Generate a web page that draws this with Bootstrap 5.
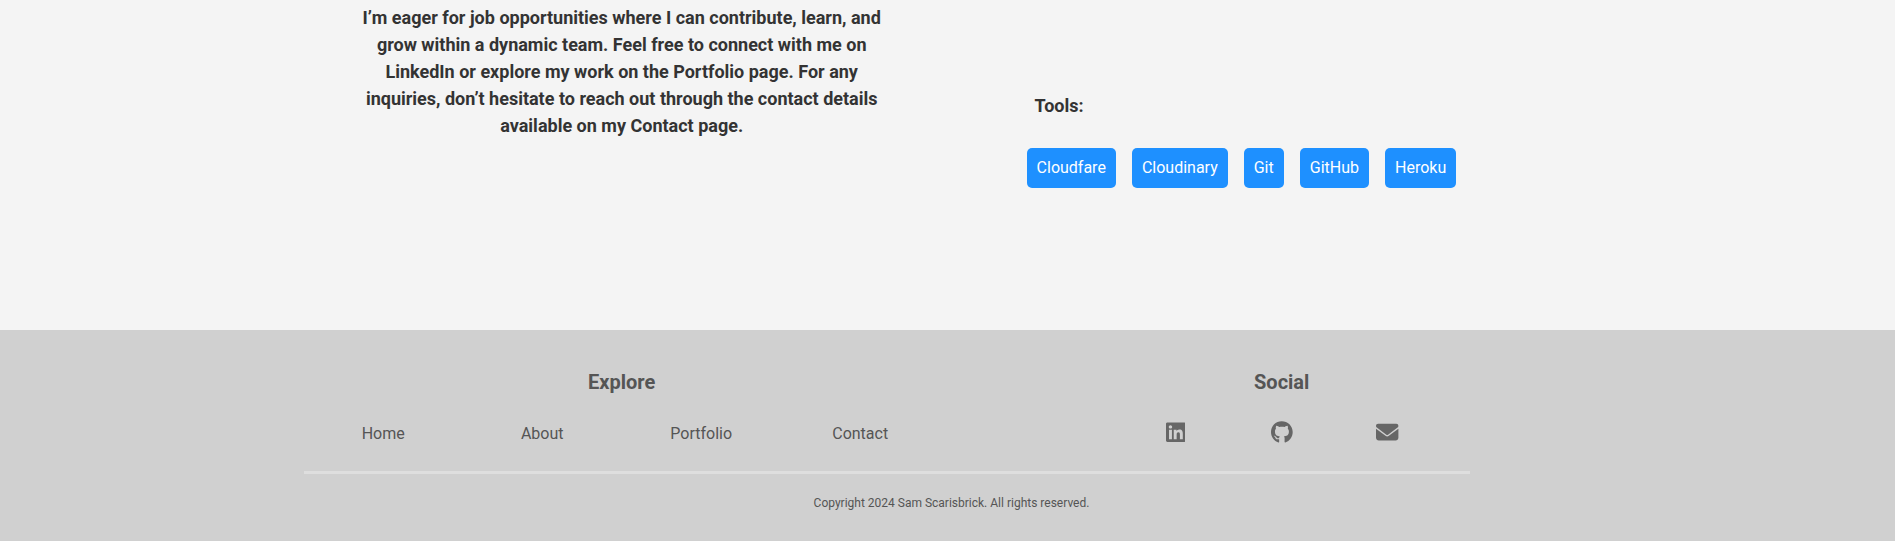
<!DOCTYPE html>
<html lang="en">
<head>
<meta charset="utf-8">
<meta name="viewport" content="width=device-width, initial-scale=1">
<title>About</title>
<link href="https://cdn.jsdelivr.net/npm/bootstrap@5.3.0/dist/css/bootstrap.min.css" rel="stylesheet">
<style>
body{font-family:Roboto,sans-serif;background:#f4f4f4;color:#333;overflow:hidden}
.page-main{height:330px;padding-left:303.7px}
.about-copy{width:636px;padding:4px 50px 0;font-size:18px;line-height:27px;font-weight:700}
.tools{margin-left:86.9px;padding-top:92px}
.tools-title{font-size:18px;line-height:27px;font-weight:700;margin:0 0 29px 8px}
.tool{background:#1e90ff;color:#fff;border-radius:5px;padding:8px 10px;line-height:24px}
.site-footer{height:211px;background:#d0d0d0;color:#555;padding-top:40px}
.footer-cols{width:1167px;margin-left:303.7px;padding-right:30px;height:101px}
.footer-title{font-size:20px;line-height:24px;font-weight:700;margin:0 0 28px}
.explore{width:636px}
.social{width:318px}
.site-footer a{color:#555;text-decoration:none;line-height:24px}
.social .footer-title{margin-bottom:27.3px}
.social svg{fill:#666;display:block;margin:0 auto}
.divider{width:1166px;height:3px;margin-left:304px;background:#dedede}
.copyright{font-size:12px;line-height:18px;margin:20px 0 0 8px}
</style>
</head>
<body>
<main class="page-main d-flex">
  <p class="about-copy text-center mb-0">I’m eager for job opportunities where I can contribute, learn, and grow within a dynamic team. Feel free to connect with me on LinkedIn or explore my work on the Portfolio page. For any inquiries, don’t hesitate to reach out through the contact details available on my Contact page.</p>
  <section class="tools">
    <h2 class="tools-title">Tools:</h2>
    <div class="d-flex gap-3">
      <span class="tool">Cloudfare</span><span class="tool">Cloudinary</span><span class="tool">Git</span><span class="tool">GitHub</span><span class="tool">Heroku</span>
    </div>
  </section>
</main>
<footer class="site-footer">
  <div class="footer-cols d-flex justify-content-between text-center">
    <nav class="explore">
      <h2 class="footer-title">Explore</h2>
      <div class="d-flex">
        <a class="flex-fill w-25" href="#">Home</a><a class="flex-fill w-25" href="#">About</a><a class="flex-fill w-25" href="#">Portfolio</a><a class="flex-fill w-25" href="#">Contact</a>
      </div>
    </nav>
    <div class="social">
      <h2 class="footer-title">Social</h2>
      <div class="row g-0">
        <a class="col-4" href="#" aria-label="LinkedIn"><svg width="19.6" height="22.4" viewBox="0 0 448 512"><path d="M416 32H31.900C14.300 32 0 46.500 0 64.300v383.400C0 465.500 14.300 480 31.900 480H416c17.600 0 32-14.500 32-32.300V64.300c0-17.800-14.400-32.300-32-32.300zM135.400 416H69V202.200h66.500V416zm-33.200-243c-21.300 0-38.500-17.300-38.500-38.500S80.900 96 102.200 96c21.200 0 38.500 17.300 38.500 38.500 0 21.300-17.200 38.500-38.500 38.500zm282.100 243h-66.400V312c0-24.800-.5-56.700-34.500-56.700-34.600 0-39.900 27-39.900 54.900V416h-66.400V202.200h63.700v29.200h.9c8.900-16.800 30.600-34.500 62.900-34.500 67.200 0 79.700 44.300 79.700 101.900V416z"/></svg></a>
        <a class="col-4" href="#" aria-label="GitHub"><svg width="21.700" height="22.400" viewBox="0 0 496 512"><path d="M165.900 397.400c0 2-2.300 3.600-5.200 3.600-3.300.3-5.600-1.300-5.600-3.600 0-2 2.300-3.600 5.200-3.600 3-.3 5.600 1.300 5.600 3.600zm-31.100-4.500c-.7 2 1.300 4.300 4.300 4.900 2.600 1 5.600 0 6.200-2s-1.300-4.300-4.300-5.200c-2.600-.7-5.500.3-6.200 2.300zm44.200-1.700c-2.900.7-4.900 2.600-4.600 4.900.3 2 2.900 3.300 5.900 2.600 2.900-.7 4.900-2.600 4.600-4.600-.3-1.900-3-3.200-5.900-2.900zM244.800 8C106.100 8 0 113.300 0 252c0 110.900 69.800 205.800 169.500 239.200 12.800 2.300 17.300-5.600 17.300-12.100 0-6.200-.3-40.400-.3-61.400 0 0-70 15-84.700-29.800 0 0-11.400-29.100-27.800-36.600 0 0-22.900-15.700 1.600-15.400 0 0 24.900 2 38.600 25.800 21.900 38.600 58.600 27.500 72.900 20.900 2.300-16 8.800-27.100 16-33.700-55.900-6.200-112.300-14.300-112.300-110.500 0-27.500 7.600-41.300 23.600-58.900-2.600-6.500-11.100-33.300 2.600-67.900 20.900-6.500 69 27 69 27 20-5.600 41.500-8.500 62.800-8.500s42.800 2.900 62.800 8.500c0 0 48.100-33.600 69-27 13.700 34.700 5.200 61.400 2.600 67.900 16 17.700 25.800 31.500 25.800 58.900 0 96.500-58.900 104.200-114.800 110.500 9.200 7.900 17 22.900 17 46.400 0 33.700-.3 75.400-.3 83.600 0 6.500 4.600 14.400 17.300 12.100C428.200 457.800 496 362.900 496 252 496 113.300 383.500 8 244.800 8z"/></svg></a>
        <a class="col-4" href="#" aria-label="Email"><svg width="22.4" height="22.4" viewBox="0 0 512 512"><path d="M48 64C21.500 64 0 85.500 0 112c0 15.100 7.100 29.300 19.200 38.400L236.800 313.600c11.400 8.500 27 8.500 38.400 0L492.800 150.400c12.100-9.100 19.200-23.300 19.200-38.400 0-26.500-21.500-48-48-48H48zM0 176V384c0 35.300 28.700 64 64 64H448c35.300 0 64-28.700 64-64V176L294.400 339.200c-22.800 17.100-54 17.100-76.800 0L0 176z"/></svg></a>
      </div>
    </div>
  </div>
  <div class="divider"></div>
  <p class="copyright text-center">Copyright 2024 Sam Scarisbrick. All rights reserved.</p>
</footer>
<script src="https://cdn.jsdelivr.net/npm/bootstrap@5.3.0/dist/js/bootstrap.bundle.min.js"></script>
</body>
</html>
